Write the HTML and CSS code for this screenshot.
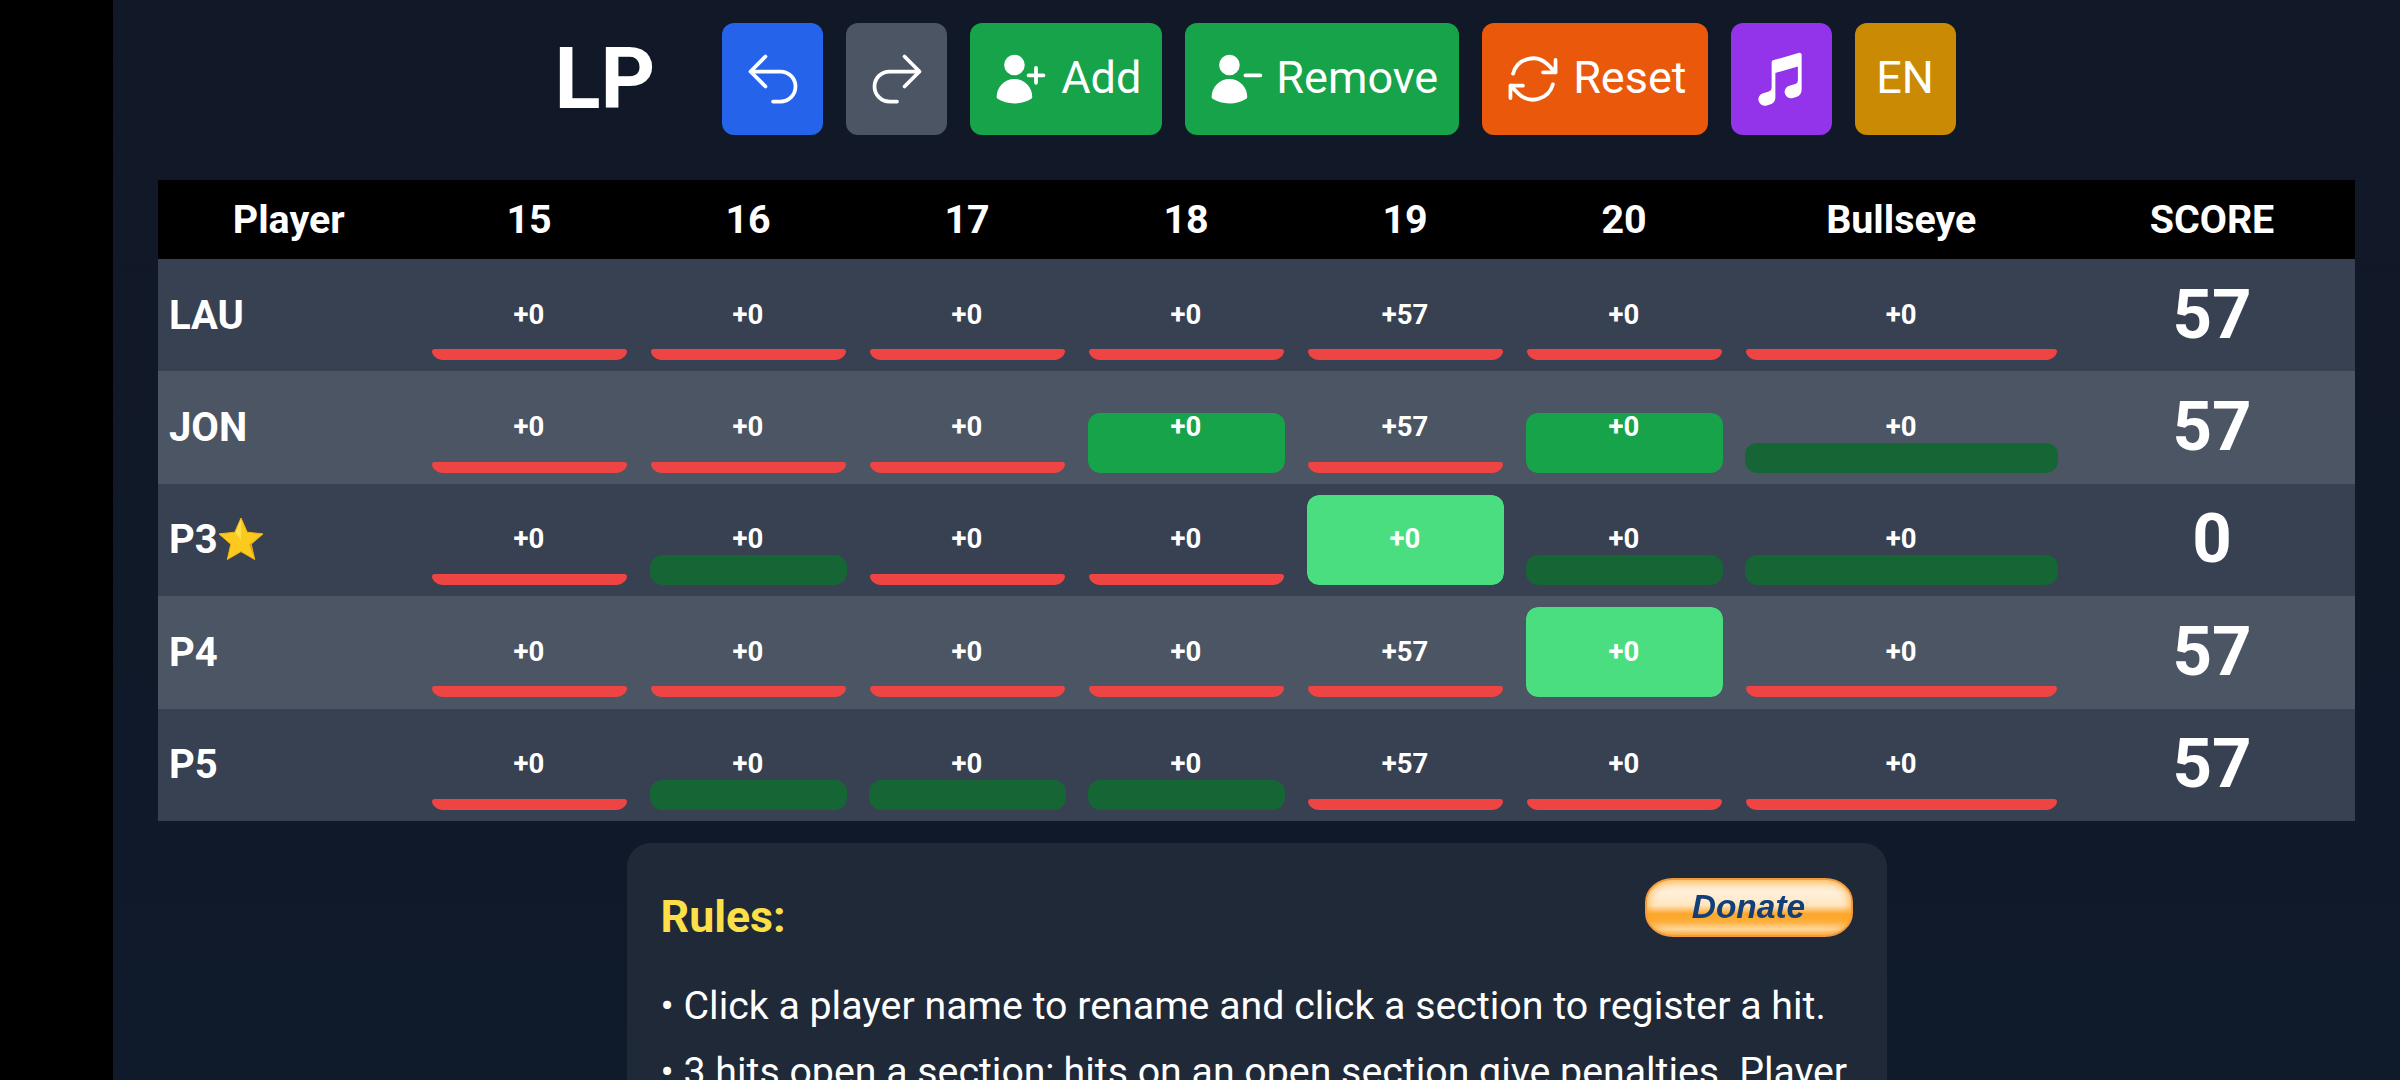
FILE: index.html
```html
<!DOCTYPE html>
<html lang="en">
<head>
    <meta charset="UTF-8">
    <meta name="viewport" content="width=device-width, initial-scale=1.0">
    <title>LP</title>
    <link rel="stylesheet" href="styles.css">
</head>
<body>
    <div class="side"></div>
    <main class="main">
        <div class="toolbar">
            <h1 class="logo">LP</h1>
            <button class="btn only blue" aria-label="Undo">
                <svg class="icon" viewBox="0 0 24 24" fill="none" stroke="currentColor" stroke-width="1.5" stroke-linecap="round" stroke-linejoin="round"><path d="M9 15 3 9m0 0 6-6M3 9h12a6 6 0 0 1 0 12h-3"/></svg>
            </button>
            <button class="btn only gray" aria-label="Redo">
                <svg class="icon" viewBox="0 0 24 24" fill="none" stroke="currentColor" stroke-width="1.5" stroke-linecap="round" stroke-linejoin="round"><path d="m15 15 6-6m0 0-6-6m6 6H9a6 6 0 0 0 0 12h3"/></svg>
            </button>
            <button class="btn green">
                <svg class="icon" viewBox="0 0 24 24" fill="currentColor"><path d="M5.25 6.375a4.125 4.125 0 1 1 8.25 0 4.125 4.125 0 0 1-8.25 0ZM2.25 19.125a7.125 7.125 0 0 1 14.25 0v.003l-.001.119a.75.75 0 0 1-.363.63 13.067 13.067 0 0 1-6.761 1.873c-2.472 0-4.786-.684-6.76-1.873a.75.75 0 0 1-.364-.63l-.001-.122ZM18.75 7.5a.75.75 0 0 0-1.5 0v2.25H15a.75.75 0 0 0 0 1.5h2.25v2.25a.75.75 0 0 0 1.5 0v-2.25H21a.75.75 0 0 0 0-1.5h-2.25V7.5Z"/></svg>
                <span class="label">Add</span>
            </button>
            <button class="btn green">
                <svg class="icon" viewBox="0 0 24 24" fill="currentColor"><path d="M5.25 6.375a4.125 4.125 0 1 1 8.25 0 4.125 4.125 0 0 1-8.25 0ZM2.25 19.125a7.125 7.125 0 0 1 14.25 0v.003l-.001.119a.75.75 0 0 1-.363.63 13.067 13.067 0 0 1-6.761 1.873c-2.472 0-4.786-.684-6.76-1.873a.75.75 0 0 1-.364-.63l-.001-.122ZM15.750 9.750a.75.75 0 0 0 0 1.500h6a.75.75 0 0 0 0-1.500h-6Z"/></svg>
                <span class="label">Remove</span>
            </button>
            <button class="btn orange">
                <svg class="icon" viewBox="0 0 24 24" fill="none" stroke="currentColor" stroke-width="1.5" stroke-linecap="round" stroke-linejoin="round"><path d="M16.023 9.348h4.992v-.001M2.985 19.644v-4.992m0 0h4.992m-4.993 0 3.181 3.183a8.25 8.25 0 0 0 13.803-3.7M4.031 9.865a8.25 8.25 0 0 1 13.803-3.7l3.181 3.182m0-4.991v4.99"/></svg>
                <span class="label">Reset</span>
            </button>
            <button class="btn only purple" aria-label="Music">
                <svg class="icon" viewBox="0 0 24 24" fill="currentColor"><path d="M19.952 1.651a.75.75 0 0 1 .298.599V16.303a3 3 0 0 1-2.176 2.884l-1.32.377a2.553 2.553 0 1 1-1.403-4.909l2.311-.66a1.5 1.5 0 0 0 1.088-1.442V6.994l-9 2.572v9.737a3 3 0 0 1-2.176 2.884l-1.32.377a2.553 2.553 0 1 1-1.402-4.909l2.31-.66a1.5 1.5 0 0 0 1.088-1.442V5.25a.75.75 0 0 1 .544-.721l10.5-3a.75.75 0 0 1 .658.122Z"/></svg>
            </button>
            <button class="btn only yellow"><span class="label">EN</span></button>
        </div>

        <table class="board">
            <thead>
                <tr>
                    <th class="col-player">Player</th>
                    <th class="col-num">15</th>
                    <th class="col-num">16</th>
                    <th class="col-num">17</th>
                    <th class="col-num">18</th>
                    <th class="col-num">19</th>
                    <th class="col-num">20</th>
                    <th class="col-bull">Bullseye</th>
                    <th class="col-score">SCORE</th>
                </tr>
            </thead>
            <tbody>
                <tr>
                    <td class="name">LAU</td>
                    <td><button class="hit"><span class="bar none"></span><span class="pts">+0</span></button></td>
                    <td><button class="hit"><span class="bar none"></span><span class="pts">+0</span></button></td>
                    <td><button class="hit"><span class="bar none"></span><span class="pts">+0</span></button></td>
                    <td><button class="hit"><span class="bar none"></span><span class="pts">+0</span></button></td>
                    <td><button class="hit"><span class="bar none"></span><span class="pts">+57</span></button></td>
                    <td><button class="hit"><span class="bar none"></span><span class="pts">+0</span></button></td>
                    <td><button class="hit"><span class="bar none"></span><span class="pts">+0</span></button></td>
                    <td class="score">57</td>
                </tr>
                <tr>
                    <td class="name">JON</td>
                    <td><button class="hit"><span class="bar none"></span><span class="pts">+0</span></button></td>
                    <td><button class="hit"><span class="bar none"></span><span class="pts">+0</span></button></td>
                    <td><button class="hit"><span class="bar none"></span><span class="pts">+0</span></button></td>
                    <td><button class="hit"><span class="bar two"></span><span class="pts">+0</span></button></td>
                    <td><button class="hit"><span class="bar none"></span><span class="pts">+57</span></button></td>
                    <td><button class="hit"><span class="bar two"></span><span class="pts">+0</span></button></td>
                    <td><button class="hit"><span class="bar one"></span><span class="pts">+0</span></button></td>
                    <td class="score">57</td>
                </tr>
                <tr>
                    <td class="name">P3<svg class="star" viewBox="0 0 44 42"><path d="M22 0l6.200 14.200 15.800 1.700-11.800 10.300 3.500 15.300L22 33.600 8.300 41.500l3.500-15.300L0 15.900l15.800-1.700z" fill="#fcc91f" stroke="#f5b50f" stroke-width="1" stroke-linejoin="round"/><path d="M22 1l-5.600 13.900 5.600 7z" fill="#ffe04a"/><path d="M43 16.300l-11.200 9.900 3 13-4.400-12.700z" fill="#d8981a"/></svg></td>
                    <td><button class="hit"><span class="bar none"></span><span class="pts">+0</span></button></td>
                    <td><button class="hit"><span class="bar one"></span><span class="pts">+0</span></button></td>
                    <td><button class="hit"><span class="bar none"></span><span class="pts">+0</span></button></td>
                    <td><button class="hit"><span class="bar none"></span><span class="pts">+0</span></button></td>
                    <td><button class="hit"><span class="bar three"></span><span class="pts">+0</span></button></td>
                    <td><button class="hit"><span class="bar one"></span><span class="pts">+0</span></button></td>
                    <td><button class="hit"><span class="bar one"></span><span class="pts">+0</span></button></td>
                    <td class="score">0</td>
                </tr>
                <tr>
                    <td class="name">P4</td>
                    <td><button class="hit"><span class="bar none"></span><span class="pts">+0</span></button></td>
                    <td><button class="hit"><span class="bar none"></span><span class="pts">+0</span></button></td>
                    <td><button class="hit"><span class="bar none"></span><span class="pts">+0</span></button></td>
                    <td><button class="hit"><span class="bar none"></span><span class="pts">+0</span></button></td>
                    <td><button class="hit"><span class="bar none"></span><span class="pts">+57</span></button></td>
                    <td><button class="hit"><span class="bar three"></span><span class="pts">+0</span></button></td>
                    <td><button class="hit"><span class="bar none"></span><span class="pts">+0</span></button></td>
                    <td class="score">57</td>
                </tr>
                <tr>
                    <td class="name">P5</td>
                    <td><button class="hit"><span class="bar none"></span><span class="pts">+0</span></button></td>
                    <td><button class="hit"><span class="bar one"></span><span class="pts">+0</span></button></td>
                    <td><button class="hit"><span class="bar one"></span><span class="pts">+0</span></button></td>
                    <td><button class="hit"><span class="bar one"></span><span class="pts">+0</span></button></td>
                    <td><button class="hit"><span class="bar none"></span><span class="pts">+57</span></button></td>
                    <td><button class="hit"><span class="bar none"></span><span class="pts">+0</span></button></td>
                    <td><button class="hit"><span class="bar none"></span><span class="pts">+0</span></button></td>
                    <td class="score">57</td>
                </tr>
            </tbody>
        </table>

        <section class="rules">
            <div class="rules-head">
                <h2>Rules:</h2>
                <a class="donate" href="#"><span>Donate</span></a>
            </div>
            <p>• Click a player name to rename and click a section to register a hit.</p>
            <p>• 3 hits open a section; hits on an open section give penalties. Player</p>
        </section>
    </main>
</body>
</html>
```

FILE: styles.css
```css
* {
    box-sizing: border-box;
}

body {
    display: flex;
    height: 1080px;
    margin: 0;
    overflow: hidden;
    background: #000;
    color: #fff;
    font-family: "Roboto", sans-serif;
}

.side {
    width: 113px;
    flex: none;
}

.main {
    flex: 1;
    padding: 23px 45px 0;
    background: linear-gradient(180deg, #111827 0%, #0f1a2a 100%);
}

/* top buttons */
.toolbar {
    display: flex;
    justify-content: center;
    align-items: center;
    gap: 23px;
    margin: 0 3px 45px 0;
}

.logo {
    margin: 0 44px 0 0;
    font-size: 85px;
    line-height: 112px;
    font-weight: 700;
}

.btn {
    display: flex;
    align-items: center;
    gap: 10px;
    height: 112px;
    padding: 0 21px;
    border: 0;
    border-radius: 12px;
    color: #fff;
    font-family: inherit;
    font-size: 45px;
    font-weight: 400;
}

.btn.only {
    justify-content: center;
    width: 101px;
    padding: 0;
}

.label {
    margin-bottom: 3px;
}

.icon {
    width: 60px;
    height: 60px;
    flex: none;
}

.blue { background: #2563eb; }
.gray { background: #4b5563; }
.green { background: #16a34a; }
.orange { background: #ea580c; }
.purple { background: #9333ea; }
.yellow { background: #ca8a04; }

/* score table */
.board {
    width: 100%;
    border-collapse: collapse;
    table-layout: fixed;
}

.board th {
    height: 79px;
    padding: 0;
    background: #000;
    font-size: 39.4px;
    font-weight: 700;
}

.col-player { width: 261.5px; }
.col-num { width: 219px; }
.col-bull { width: 335.5px; }

.board td {
    height: 112.4px;
    padding: 0 11px;
    text-align: center;
}

.board tbody tr:nth-child(odd) { background: #374151; }
.board tbody tr:nth-child(even) { background: #4b5563; }

.board td.name {
    text-align: left;
    font-size: 40px;
    font-weight: 700;
}

.star {
    width: 44px;
    height: 42px;
    margin-left: 1px;
    vertical-align: -7px;
}

.board td.score {
    padding-bottom: 2px;
    font-size: 69px;
    font-weight: 700;
}

.hit {
    position: relative;
    display: block;
    width: 100%;
    height: 90px;
    padding: 0 0 2px;
    border: 0;
    border-radius: 12px;
    background: none;
    overflow: hidden;
    color: #fff;
    font-family: inherit;
}

.pts {
    position: relative;
    font-size: 27.5px;
    font-weight: 700;
}

.bar {
    position: absolute;
    left: 0;
    right: 0;
    bottom: 0;
    border-radius: 12px;
}

.bar.none {
    left: 1px;
    right: 1px;
    height: 11px;
    background: #ef4444;
    border-radius: 4px 4px 12px 12px;
}

.bar.one {
    height: 30px;
    background: #166534;
}

.bar.two {
    height: 60px;
    background: #16a34a;
}

.bar.three {
    height: 90px;
    background: #4ade80;
}

/* rules box */
.rules {
    width: 1260px;
    margin: 22px auto 0;
    padding: 34px;
    border-radius: 24px;
    background: #1f2937;
}

.rules-head {
    display: flex;
    justify-content: space-between;
    align-items: flex-start;
    margin-bottom: 28px;
}

.rules h2 {
    margin: 12px 0 0;
    color: #fde047;
    font-size: 44.7px;
    line-height: 56px;
    font-weight: 700;
}

.rules p {
    margin: 0;
    font-size: 39.3px;
    line-height: 66px;
}

.donate {
    display: flex;
    align-items: center;
    justify-content: center;
    width: 208px;
    height: 59px;
    margin-top: 1px;
    border: 2px solid #f49a3c;
    border-radius: 28px / 24px;
    background: linear-gradient(180deg, #ffe3b8 0%, #fff0dc 22%, #ffe6c0 46%, #fda629 62%, #fdae3c 76%, #ffdcaa 90%, #f9b765 100%);
    box-shadow: inset 0 0 10px #fda629;
    text-decoration: none;
}

.donate span {
    color: #123f78;
    font-family: "Liberation Sans", sans-serif;
    font-size: 33.5px;
    font-style: italic;
    font-weight: 700;
    filter: blur(0.6px);
}
```
